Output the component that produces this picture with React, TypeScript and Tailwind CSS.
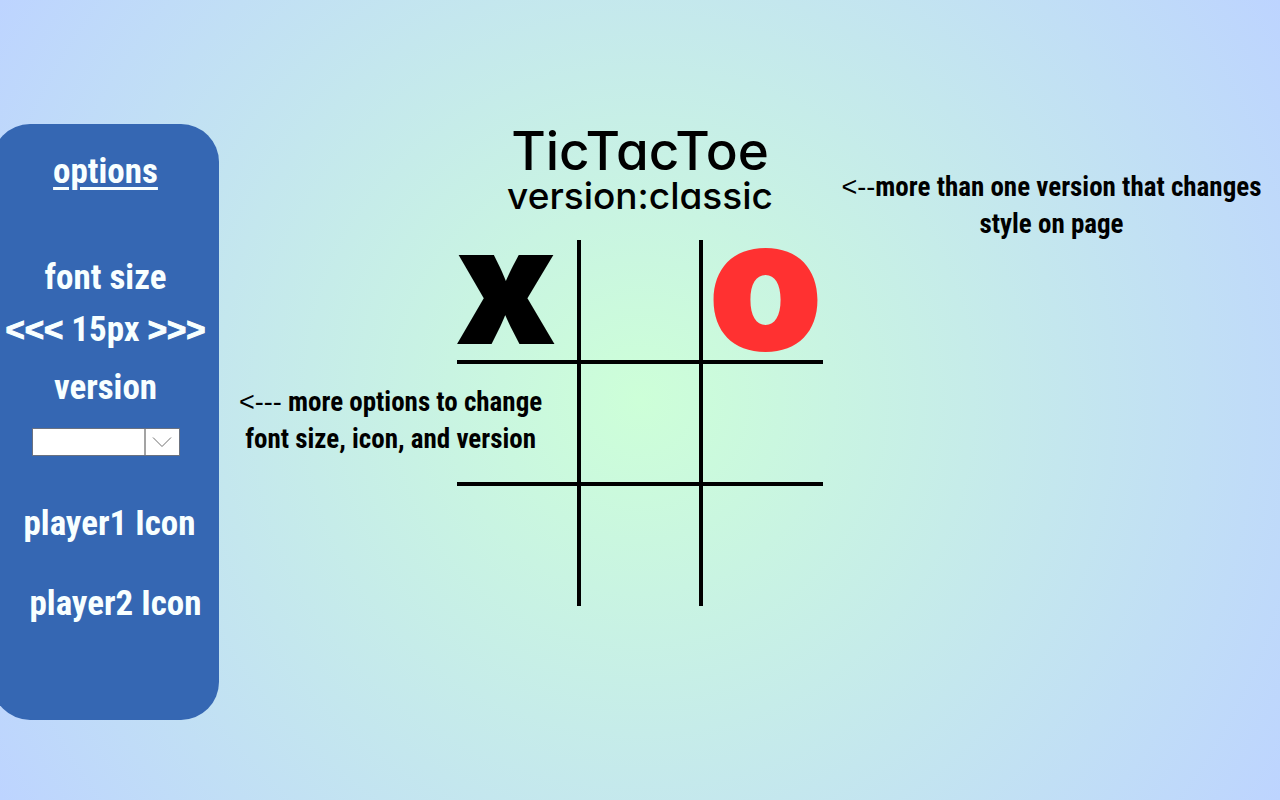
import { useState } from "react";
import type { ReactNode } from "react";

const HAND = "font-['Roboto_Condensed','Open_Sans_Condensed','Lato',sans-serif] font-bold";

const VERSIONS = ["", "classic"];
const START = ["x", "", "o", "", "", "", "", "", ""];

function Sidebar() {
  const [size, setSize] = useState(15);
  const [version, setVersion] = useState("");
  return (
    <aside
      className={`${HAND} -ml-2 flex min-h-[596px] w-[227px] shrink-0 flex-col items-center rounded-[38px] bg-[#3567b3] pt-7 text-[35px] leading-10 whitespace-nowrap text-[#f8ffff]`}
    >
      <h2 className="underline decoration-[3px] underline-offset-4">options</h2>
      <span className="mt-[66px]">font size</span>
      <div className="mt-3 flex items-center gap-2">
        <button
          type="button"
          aria-label="Smaller font"
          onClick={() => setSize(size - 1)}
          className="font-['Liberation_Sans',sans-serif] text-[33px] [-webkit-text-stroke:1px_currentColor]"
        >
          {"<<<"}
        </button>
        <output>{size}px</output>
        <button
          type="button"
          aria-label="Larger font"
          onClick={() => setSize(size + 1)}
          className="font-['Liberation_Sans',sans-serif] text-[33px] [-webkit-text-stroke:1px_currentColor]"
        >
          {">>>"}
        </button>
      </div>
      <label htmlFor="version" className="mt-[18px]">
        version
      </label>
      <div className="mt-5 grid h-7 w-[148px] border border-[#6b7280] bg-white">
        <select
          id="version"
          value={version}
          onChange={(e) => setVersion(e.target.value)}
          className="col-start-1 row-start-1 w-full appearance-none bg-transparent px-2 text-base text-black"
        >
          {VERSIONS.map((v) => (
            <option key={v} value={v}>
              {v}
            </option>
          ))}
        </select>
        <span className="pointer-events-none col-start-1 row-start-1 flex w-[35px] items-center justify-center justify-self-end border-l-2 border-[#a3a3a3]">
          <svg viewBox="0 0 20 12" className="h-3 w-5" fill="none" stroke="#707070" strokeWidth="1">
            <path d="M1 1.5 10 10.5 19 1.5" />
          </svg>
        </span>
      </div>
      <button type="button" className="mt-12 ml-2">
        player1 Icon
      </button>
      <button type="button" className="mt-10 ml-5">
        player2 Icon
      </button>
    </aside>
  );
}

function Board() {
  const [cells, setCells] = useState(START);
  const play = (i: number) => {
    if (cells[i]) return;
    const turn = cells.filter(Boolean).length % 2 ? "o" : "x";
    setCells(cells.map((c, n) => (n === i ? turn : c)));
  };
  return (
    <div className="mt-[26px] grid grid-cols-[124px_122px_120px] grid-rows-[124px_122px_120px] font-['Inter',sans-serif] font-black">
      {cells.map((c, i) => (
        <button
          key={i}
          type="button"
          aria-label={`Square ${i + 1}`}
          onClick={() => play(i)}
          className={`flex items-start border-black ${i % 3 < 2 ? "border-r-4" : ""} ${i < 6 ? "border-b-4" : ""} ${
            c === "o"
              ? "justify-end text-[184px] leading-[86px] text-[#ff3131]"
              : "text-[160px] leading-[90px] text-black [-webkit-text-stroke:2px_currentColor]"
          }`}
        >
          {c}
        </button>
      ))}
    </div>
  );
}

function Note({ arrow, children }: { arrow: string; children: ReactNode }) {
  return (
    <p className={`${HAND} text-center text-[27px] leading-[37px] whitespace-nowrap text-black`}>
      <span className="font-['Liberation_Sans',sans-serif] font-normal">{arrow}</span>
      {children}
    </p>
  );
}

export default function App() {
  return (
    <main className="grid min-h-screen grid-cols-[minmax(0,1fr)_auto_minmax(0,1fr)] items-start overflow-x-hidden bg-[radial-gradient(circle_at_center,#cdffd8,#bdd4ff)] pt-[124px]">
      <div className="flex">
        <Sidebar />
        <div className="mt-[260px] ml-5">
          <Note arrow="<---">
            {" "}more options to change
            <br />
            font size, icon, and version
          </Note>
        </div>
      </div>
      <section className="flex flex-col items-center font-['Inter',sans-serif] font-medium text-black [font-feature-settings:'cv11']">
        <h1 className="text-[53px] leading-[54px]">TicTacToe</h1>
        <p className="text-[37px] leading-9">version:classic</p>
        <Board />
      </section>
      <div className="mt-[45px] flex justify-center">
        <Note arrow="<--">
          more than one version that changes
          <br />
          style on page
        </Note>
      </div>
    </main>
  );
}
